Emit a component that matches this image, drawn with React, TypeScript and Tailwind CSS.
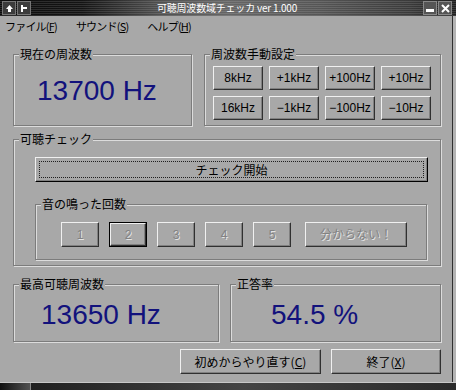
import type { ReactNode } from 'react'

const face = 'bg-[#a8a8a8]'
const raised =
  'border border-t-[#f0f0f0] border-l-[#f0f0f0] border-r-[#303030] border-b-[#303030] shadow-[inset_-1px_-1px_0_#808080]'

function Group({ label, className, children }: { label: string; className?: string; children?: ReactNode }) {
  return (
    <div
      className={`relative border border-[#7c7c7c] shadow-[1px_1px_0_#dcdcdc,inset_1px_1px_0_#dcdcdc] ${className ?? ''}`}
    >
      <span className={`absolute -top-[8px] left-[5px] px-[1px] ${face} text-[12px] leading-[14px] text-black`}>
        {label}
      </span>
      {children}
    </div>
  )
}

function Btn({ children, className, disabled, isDefault }: { children: ReactNode; className?: string; disabled?: boolean; isDefault?: boolean }) {
  return (
    <div className={`${isDefault ? 'border border-black' : ''} ${className ?? ''} flex`}>
      <div
        className={`${raised} flex-1 flex items-center justify-center text-[12px] leading-[14px] ${
          disabled ? 'text-[#828282] [text-shadow:1px_1px_0_#e4e4e4]' : 'text-black'
        }`}
      >
        {children}
      </div>
    </div>
  )
}

function TitleBar() {
  return (
    <div className="h-[16px] flex items-center bg-[repeating-linear-gradient(to_bottom,transparent_0px,transparent_1px,rgba(255,255,255,0.12)_1px,rgba(255,255,255,0.12)_2px),linear-gradient(to_right,#0c0c0c_0%,#141414_18%,#505050_35%,#666_50%,#555_70%,#3a3a3a_90%,#202020_100%)]">
      <div className="ml-[2px] w-[14px] h-[14px] bg-[#3c3c3c] border border-[#777] flex items-center justify-center">
        <svg width="9" height="9" viewBox="0 0 9 9">
          <path d="M4.5 1 L8 5 L6 5 L6 8 L3 8 L3 5 L1 5 Z" fill="#fff" />
        </svg>
      </div>
      <div className="ml-[1px] w-[14px] h-[14px] bg-[#3c3c3c] border border-[#777] flex items-center justify-center">
        <svg width="9" height="9" viewBox="0 0 9 9">
          <path d="M2 1 V8 M2 4 H7" stroke="#fff" strokeWidth="2" fill="none" />
        </svg>
      </div>
      <div className="flex-1 text-center text-white text-[10px] leading-[14px] tracking-[-0.2px]">
        可聴周波数域チェッカ ver 1.000
      </div>
      <div className="w-[14px] h-[14px] bg-[#555] border border-[#888] flex items-end justify-center pb-[2px]">
        <div className="w-[8px] h-[3px] bg-white" />
      </div>
      <div className="ml-[1px] mr-[4px] w-[14px] h-[14px] bg-[#555] border border-[#888] flex items-center justify-center">
        <svg width="9" height="9" viewBox="0 0 9 9">
          <path d="M1 1 L8 8 M8 1 L1 8" stroke="#fff" strokeWidth="2" />
        </svg>
      </div>
    </div>
  )
}

export default function App() {
  const freqButtons = ['8kHz', '+1kHz', '+100Hz', '+10Hz', '16kHz', '−1kHz', '−100Hz', '−10Hz']
  const bigText = "font-['Liberation_Sans',Arial,sans-serif] text-[28px] leading-[32px] text-[#12127c]"

  return (
    <div className={`w-[456px] h-[390px] ${face} flex flex-col overflow-hidden font-['Noto_Sans_CJK_JP','Noto_Sans_CJK_SC',sans-serif]`}>
      <TitleBar />
      <div className="flex-1 flex">
        <div className="w-[452px] flex flex-col">
          <div className="h-[20px] flex items-center text-[11px] leading-[14px] tracking-[-0.8px] text-black">
            <span className="ml-[5px]">ファイル(<u>F</u>)</span>
            <span className="ml-[19px]">サウンド(<u>S</u>)</span>
            <span className="ml-[19px]">ヘルプ(<u>H</u>)</span>
          </div>

          <div className="pl-[13px] flex flex-col">
            <div className="mt-[18px] flex gap-[12px]">
              <Group label="現在の周波数" className="w-[179px] h-[72px]">
                <div className={`pt-[20px] pl-[23px] ${bigText}`}>13700 Hz</div>
              </Group>
              <Group label="周波数手動設定" className="w-[237px] h-[72px]">
                <div className="pt-[11px] pl-[8px] grid grid-cols-[50px_50px_50px_50px] gap-x-[6px] gap-y-[6px] font-['Liberation_Sans','Noto_Sans_CJK_JP',sans-serif]">
                  {freqButtons.map((b) => (
                    <Btn key={b} className="h-[24px]">
                      {b}
                    </Btn>
                  ))}
                </div>
              </Group>
            </div>

            <Group label="可聴チェック" className="mt-[13px] w-[428px] h-[127px]">
              <div className="pt-[17px] pl-[21px]">
                <div className={`w-[393px] h-[25px] flex ${raised} border-r-black border-b-black p-[3px]`}>
                  <div className="flex-1 border border-dotted border-[#202020] flex items-center justify-center text-[12px] leading-[14px]">
                    チェック開始
                  </div>
                </div>
                <Group label="音の鳴った回数" className="mt-[22px] w-[392px] h-[56px]">
                  <div className="pt-[17px] pl-[25px] flex gap-[10px] font-['Liberation_Sans','Noto_Sans_CJK_JP',sans-serif]">
                    {['1', '2', '3', '4', '5'].map((n) => (
                      <Btn key={n} className="w-[38px] h-[25px]" disabled isDefault={n === '2'}>
                        {n}
                      </Btn>
                    ))}
                    <Btn className="ml-[4px] w-[102px] h-[25px]" disabled>
                      分からない！
                    </Btn>
                  </div>
                </Group>
              </div>
            </Group>

            <div className="mt-[18px] flex gap-[11px]">
              <Group label="最高可聴周波数" className="w-[206px] h-[58px]">
                <div className={`pt-[14px] pl-[27px] ${bigText}`}>13650 Hz</div>
              </Group>
              <Group label="正答率" className="w-[211px] h-[58px]">
                <div className={`pt-[14px] pl-[40px] ${bigText}`}>54.5 %</div>
              </Group>
            </div>

            <div className="mt-[7px] w-[428px] flex justify-end gap-[10px]">
              <Btn className="w-[141px] h-[25px]">
                初めからやり直す(<u>C</u>)
              </Btn>
              <Btn className="w-[110px] h-[25px]">
                終了(<u>X</u>)
              </Btn>
            </div>
          </div>
        </div>
        <div className="flex-1 border-l border-[#303030] bg-[#b4b4b4]" />
      </div>
      <div className="h-[8px] flex border-t border-[#c8c8c8]">
        <div className="w-[31px] bg-[linear-gradient(to_right,#101010,#505050)] border-r border-[#888]" />
        <div className="flex-1 bg-[linear-gradient(to_right,#202020,#444,#2a2a2a)]" />
      </div>
    </div>
  )
}
